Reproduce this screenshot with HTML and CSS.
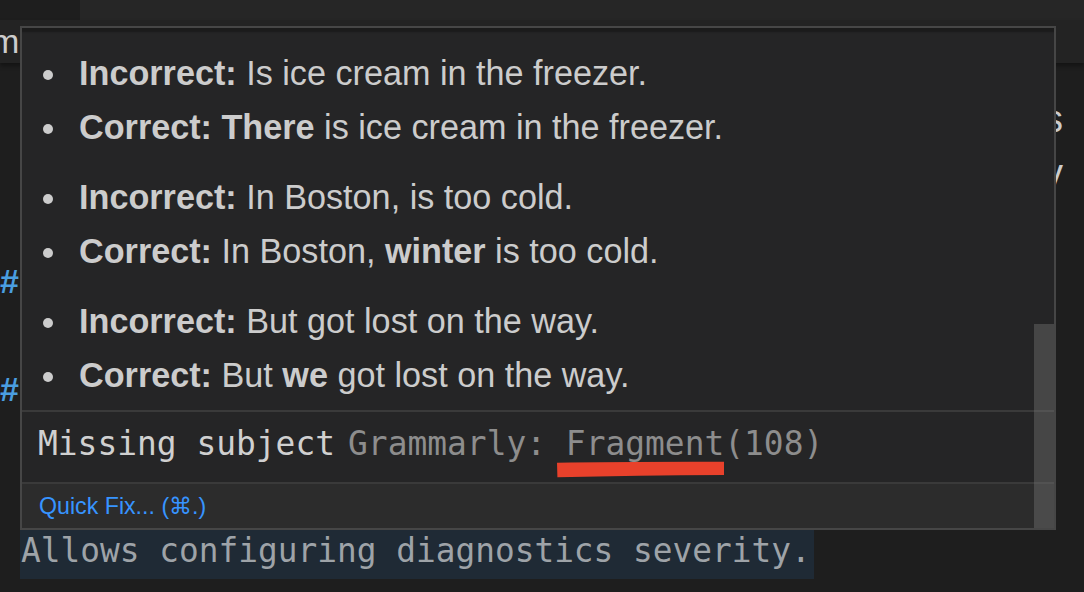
FILE: index.html
```html
<!DOCTYPE html>
<html lang="en">
<head>
<meta charset="utf-8">
<title>Hover</title>
<link rel="stylesheet" href="styles.css">
</head>
<body>
<div class="editor">
  <div class="tabs"><div class="tabs-left"></div><div class="tabs-rest"></div></div>
  <div class="crumbs"><span class="crumb-text">m</span></div>
  <div class="lines">
    <div class="line"><span></span><span class="edge">s</span></div>
    <div class="line"><span></span><span class="edge">y</span></div>
    <div class="line"></div>
    <div class="line"><span class="hash">#</span></div>
    <div class="line"></div>
    <div class="line"><span class="hash">#</span></div>
  </div>
</div>

<div class="overlay">
  <div class="hover">
    <div class="hover-body">
      <ul>
        <li><b>Incorrect:</b> Is ice cream in the freezer.</li>
        <li><b>Correct: There</b> is ice cream in the freezer.</li>
      </ul>
      <ul>
        <li><b>Incorrect:</b> In Boston, is too cold.</li>
        <li><b>Correct:</b> In Boston, <b>winter</b> is too cold.</li>
      </ul>
      <ul>
        <li><b>Incorrect:</b> But got lost on the way.</li>
        <li><b>Correct:</b> But <b>we</b> got lost on the way.</li>
      </ul>
    </div>
    <div class="status"><span class="message">Missing subject</span><span class="source">Grammarly: Fragment(108)</span></div>
    <div class="quickfix">Quick Fix... (⌘.)</div>
    <div class="thumb"></div>
    <svg class="scribble" width="168" height="18" viewBox="0 0 168 18" aria-hidden="true">
      <path d="M0 1.8 Q60 0.6 167 0.8 L167 14 Q80 14.4 0.4 16.2 Z" fill="#e8412b"/>
    </svg>
  </div>
  <div class="selected-line">Allows configuring diagnostics severity.</div>
</div>
</body>
</html>
```
FILE: styles.css
```css
html, body {
  margin: 0;
  padding: 0;
}

body {
  width: 1084px;
  height: 592px;
  overflow: hidden;
  position: relative;
  background: #1e1e1e;
  font-family: "Liberation Sans", Arial, sans-serif;
  color: #cccccc;
}

.tabs {
  display: flex;
  height: 20px;
}

.tabs-left {
  width: 80px;
  background: #1e1e1e;
}

.tabs-rest {
  flex: 1;
  background: #262626;
}

.crumbs {
  height: 43px;
  background: #232323;
  box-shadow: 0 3px 4px rgba(0, 0, 0, 0.35);
  position: relative;
  z-index: 1;
  font-size: 34px;
  line-height: 43px;
  color: #cccccc;
  white-space: nowrap;
  overflow: hidden;
}

.crumb-text {
  display: inline-block;
  margin-left: -9px;
}

.lines {
  padding-top: 29px;
}

.line {
  height: 54px;
  line-height: 54px;
  font-size: 34px;
  display: flex;
  justify-content: space-between;
  padding-right: 21px;
  color: #cccccc;
}

.hash {
  color: #4a9ee0;
  font-weight: bold;
  font-size: 34px;
}

.edge {
  font-size: 38px;
}

.overlay {
  position: absolute;
  z-index: 5;
  left: 20px;
  top: 26px;
  display: flex;
  flex-direction: column;
  align-items: flex-start;
}

.hover {
  width: 1036px;
  height: 504px;
  box-sizing: border-box;
  border: 2px solid #464646;
  background: #252526;
  display: flex;
  flex-direction: column;
  position: relative;
}

.hover-body {
  height: 382px;
  flex: none;
  box-sizing: border-box;
  overflow: hidden;
  padding-top: 18px;
  box-shadow: inset 0 6px 2px -2px #1b1b1b;
}

.hover-body ul {
  list-style: none;
  margin: 0 0 16px;
  padding: 0;
}

.hover-body li {
  padding-left: 57px;
  font-size: 34.2px;
  line-height: 54px;
  color: #cccccc;
  white-space: nowrap;
}

.hover-body li::before {
  content: "";
  display: inline-block;
  width: 10px;
  height: 10px;
  border-radius: 50%;
  background: #cccccc;
  margin-left: -36px;
  margin-right: 26px;
  vertical-align: 5px;
}

.hover-body b {
  font-weight: bold;
}

.status {
  height: 72px;
  flex: none;
  box-sizing: border-box;
  border-top: 2px solid #3a3a3a;
  padding: 12px 0 0 16px;
  font-family: "DejaVu Sans Mono", "Liberation Mono", monospace;
  font-size: 32.9px;
  line-height: 40px;
  color: #d0d0d0;
  white-space: nowrap;
}

.source {
  color: #8d8d8d;
  margin-left: 13px;
}

.quickfix {
  height: 46px;
  flex: none;
  box-sizing: border-box;
  border-top: 2px solid #3a3a3a;
  background: #2c2c2c;
  padding-left: 17px;
  font-size: 23.2px;
  line-height: 44px;
  color: #3794ff;
}

.thumb {
  position: absolute;
  right: 0;
  top: 296px;
  bottom: 0;
  width: 20px;
  background: rgba(121, 121, 121, 0.4);
}

.scribble {
  position: absolute;
  left: 535px;
  top: 433px;
}

.selected-line {
  background: #1f2a35;
  color: #9ea3a8;
  font-family: "DejaVu Sans Mono", "Liberation Mono", monospace;
  font-size: 32.8px;
  line-height: 40px;
  padding: 1px 3px 8px 1px;
  white-space: nowrap;
}
```
